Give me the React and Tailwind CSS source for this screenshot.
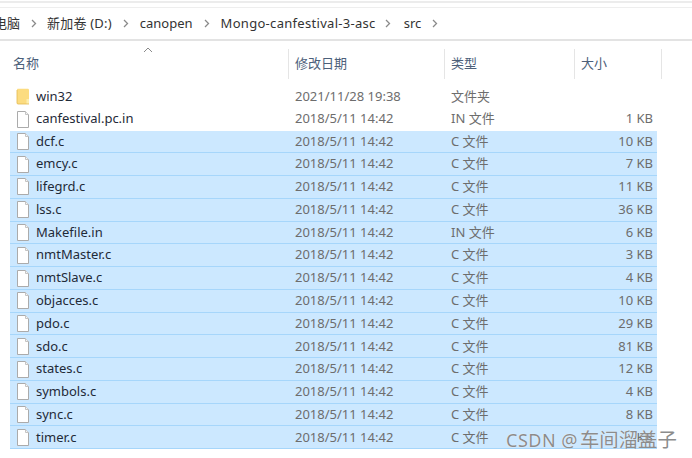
import React from 'react';

const files = [
  ['canfestival.pc.in', '2018/5/11 14:42', 'IN 文件', '1 KB', false],
  ['dcf.c', '2018/5/11 14:42', 'C 文件', '10 KB', true],
  ['emcy.c', '2018/5/11 14:42', 'C 文件', '7 KB', true],
  ['lifegrd.c', '2018/5/11 14:42', 'C 文件', '11 KB', true],
  ['lss.c', '2018/5/11 14:42', 'C 文件', '36 KB', true],
  ['Makefile.in', '2018/5/11 14:42', 'IN 文件', '6 KB', true],
  ['nmtMaster.c', '2018/5/11 14:42', 'C 文件', '3 KB', true],
  ['nmtSlave.c', '2018/5/11 14:42', 'C 文件', '4 KB', true],
  ['objacces.c', '2018/5/11 14:42', 'C 文件', '10 KB', true],
  ['pdo.c', '2018/5/11 14:42', 'C 文件', '29 KB', true],
  ['sdo.c', '2018/5/11 14:42', 'C 文件', '81 KB', true],
  ['states.c', '2018/5/11 14:42', 'C 文件', '12 KB', true],
  ['symbols.c', '2018/5/11 14:42', 'C 文件', '4 KB', true],
  ['sync.c', '2018/5/11 14:42', 'C 文件', '8 KB', true],
  // size of the last row is hidden under the watermark
  ['timer.c', '2018/5/11 14:42', 'C 文件', 'KB', true],
];

function FileIcon() {
  return (
    <svg width="14" height="17" viewBox="0 0 14 17" className="shrink-0">
      <path d="M1.5 0.5H9.5L12.5 3.5V16.5H1.5Z" fill="#fff" stroke="#ababab" />
      <path d="M9.5 0.5V3.5H12.5" fill="#f4f4f4" stroke="#c4c4c4" />
    </svg>
  );
}

function FolderIcon() {
  return (
    <svg width="14" height="17" viewBox="0 0 14 17" className="shrink-0">
      <path d="M1 2C1 1.2 1.4 0.8 2 0.8H11.5C12.3 0.8 13 1.3 13 2V16H2C1.4 16 1 15.6 1 15Z" fill="#fcdc80" />
      <path d="M10.5 11H13V16H10.5Z" fill="#fdeeb0" />
      <path d="M1 2V15C1 15.6 1.4 16 2 16H13" fill="none" stroke="#e3b94f" strokeWidth="0.8" />
    </svg>
  );
}

function Chevron({ className }) {
  return (
    <svg width="6" height="9" viewBox="0 0 6 9" className={`shrink-0 ${className}`}>
      <path d="M1 1L4.5 4.5L1 8" fill="none" stroke="#8a8a8a" strokeWidth="1.3" />
    </svg>
  );
}

function Row({ name, date, type, size, selected, folder }) {
  return (
    <div className={`flex h-[22.77px] items-center text-[13px] ${selected ? 'border-b border-[#a6d6fb] bg-[#cce8ff]' : ''}`}>
      <div className="flex w-[278px] items-center pl-[6px]">
        {folder ? <FolderIcon /> : <FileIcon />}
        <span className="ml-[6px] text-[#1f2a38]">{name}</span>
      </div>
      <div className="w-[156px] pl-[7px] text-[#6d6d6d]">{date}</div>
      <div className="w-[96px] pl-[7px] text-[#6d6d6d]">{type}</div>
      <div className="w-[113px] text-right text-[#6d6d6d]">{size}</div>
    </div>
  );
}

function HeaderCell({ className, children }) {
  return <div className={`flex h-[30px] items-center border-r border-[#e5e5e5] text-[13px] text-[#4c607a] ${className}`}>{children}</div>;
}

export default function App() {
  return (
    <div className="relative h-[458px] w-[692px] overflow-hidden bg-white font-['Noto_Sans','Noto_Sans_CJK_SC',sans-serif]">
      <div className="h-[8px] border-b border-[#eeeeee] pt-[1px]">
        <div className="h-[2px] bg-[#ececec]" />
      </div>
      <div className="flex h-[33px] items-center border-b-2 border-[#e3e3e3] text-[13px] text-[#333]">
        <span className="ml-[-6px] w-[26px] whitespace-nowrap">电脑</span>
        <Chevron className="ml-[11px] mr-[10px]" />
        <span className="tracking-[0.2px]">新加卷 (D:)</span>
        <Chevron className="ml-[11px] mr-[11px]" />
        <span>canopen</span>
        <Chevron className="ml-[11px] mr-[11px]" />
        <span className="tracking-[0.3px]">Mongo-canfestival-3-asc</span>
        <Chevron className="ml-[9px] mr-[13px]" />
        <span>src</span>
        <Chevron className="ml-[11px]" />
      </div>
      <div className="relative mt-[8px] flex pl-[13px]">
        <svg width="10" height="6" viewBox="0 0 10 6" className="absolute left-[143px] top-[-2px]">
          <path d="M1 5L5 1L9 5" fill="none" stroke="#8a8a8a" />
        </svg>
        <HeaderCell className="w-[276px]">名称</HeaderCell>
        <HeaderCell className="w-[156px] pl-[6px]">修改日期</HeaderCell>
        <HeaderCell className="w-[130px] pl-[6px]">类型</HeaderCell>
        <HeaderCell className="w-[87px] pl-[6px]">大小</HeaderCell>
      </div>
      <div className="ml-[10px] mt-[6px] w-[647px]">
        <Row name="win32" date="2021/11/28 19:38" type="文件夹" size="" folder />
        {files.map(([name, date, type, size, selected]) => (
          <Row key={name} name={name} date={date} type={type} size={size} selected={selected} />
        ))}
      </div>
      <div className="absolute left-[506px] top-[425px] flex items-baseline whitespace-nowrap text-[#8c8c8c] [text-shadow:0_0_1px_#fff]">
        <span className="text-[18px] tracking-[0.5px]">CSDN @</span>
        <span className="ml-[2px] text-[19.4px]">车间溜盖子</span>
      </div>
    </div>
  );
}
